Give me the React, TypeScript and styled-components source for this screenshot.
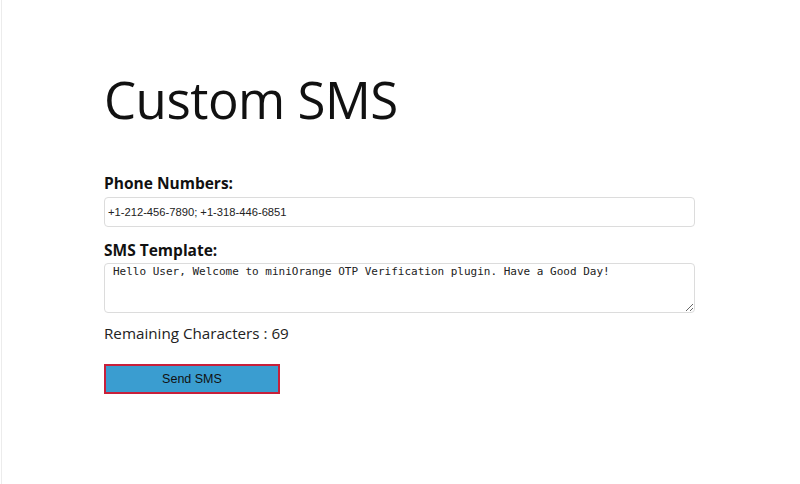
import React from "react";
import styled, { createGlobalStyle } from "styled-components";

const Global = createGlobalStyle`
  html, body { margin: 0; padding: 0; background: #fff; }
  body { font-family: "Open Sans", "Noto Sans", sans-serif; color: #111; }
`;

const Page = styled.div`
  height: 484px;
  box-sizing: border-box;
  margin-left: 1px;
  border-left: 1px solid #ececec;
  padding: 64px 0 0 102px;
`;

const Title = styled.h1`
  margin: 0;
  font-family: "Open Sans", sans-serif;
  font-weight: 400;
  font-size: 51px;
  line-height: 70px;
  letter-spacing: -0.5px;
  color: #111;
`;

const Form = styled.form`
  display: flex;
  flex-direction: column;
  width: 591px;
  margin-top: 39px;
`;

const Label = styled.label`
  font-family: "Open Sans", sans-serif;
  font-weight: 700;
  font-size: 15.5px;
  line-height: 20px;
  color: #111;
  margin-bottom: 3px;
`;

const TextInput = styled.input`
  box-sizing: border-box;
  height: 30px;
  width: 100%;
  border: 1px solid #dcdcdc;
  border-radius: 4px;
  padding: 0 3px;
  font-family: "Liberation Sans", Arial, sans-serif;
  font-size: 11.2px;
  color: #222;
  margin: 1px 0 13px;
  outline: none;
`;

const TextArea = styled.textarea`
  box-sizing: border-box;
  height: 50px;
  width: 100%;
  border: 1px solid #dcdcdc;
  border-radius: 4px;
  padding: 0 8px;
  font-family: "DejaVu Sans Mono", "Liberation Mono", monospace;
  font-size: 11px;
  line-height: 15px;
  color: #222;
  resize: vertical;
  outline: none;
`;

const Remaining = styled.div`
  font-family: "Open Sans", sans-serif;
  font-size: 15.2px;
  line-height: 20px;
  color: #222;
  margin-top: 10px;
`;

const SendButton = styled.button`
  box-sizing: border-box;
  width: 176px;
  height: 30px;
  margin-top: 21px;
  background: #3a9dd0;
  border: 2px solid #c8203a;
  font-family: "Liberation Sans", Arial, sans-serif;
  font-size: 12.5px;
  color: #111;
  cursor: pointer;
`;

export default function App() {
  return (
    <>
      <Global />
      <Page>
        <Title>Custom SMS</Title>
        <Form onSubmit={(e) => e.preventDefault()}>
          <Label htmlFor="phones">Phone Numbers:</Label>
          <TextInput id="phones" defaultValue="+1-212-456-7890; +1-318-446-6851" />
          <Label htmlFor="tpl">SMS Template:</Label>
          <TextArea
            id="tpl"
            defaultValue="Hello User, Welcome to miniOrange OTP Verification plugin. Have a Good Day!"
          />
          <Remaining>Remaining Characters : 69</Remaining>
          <div>
            <SendButton type="submit">Send SMS</SendButton>
          </div>
        </Form>
      </Page>
    </>
  );
}
